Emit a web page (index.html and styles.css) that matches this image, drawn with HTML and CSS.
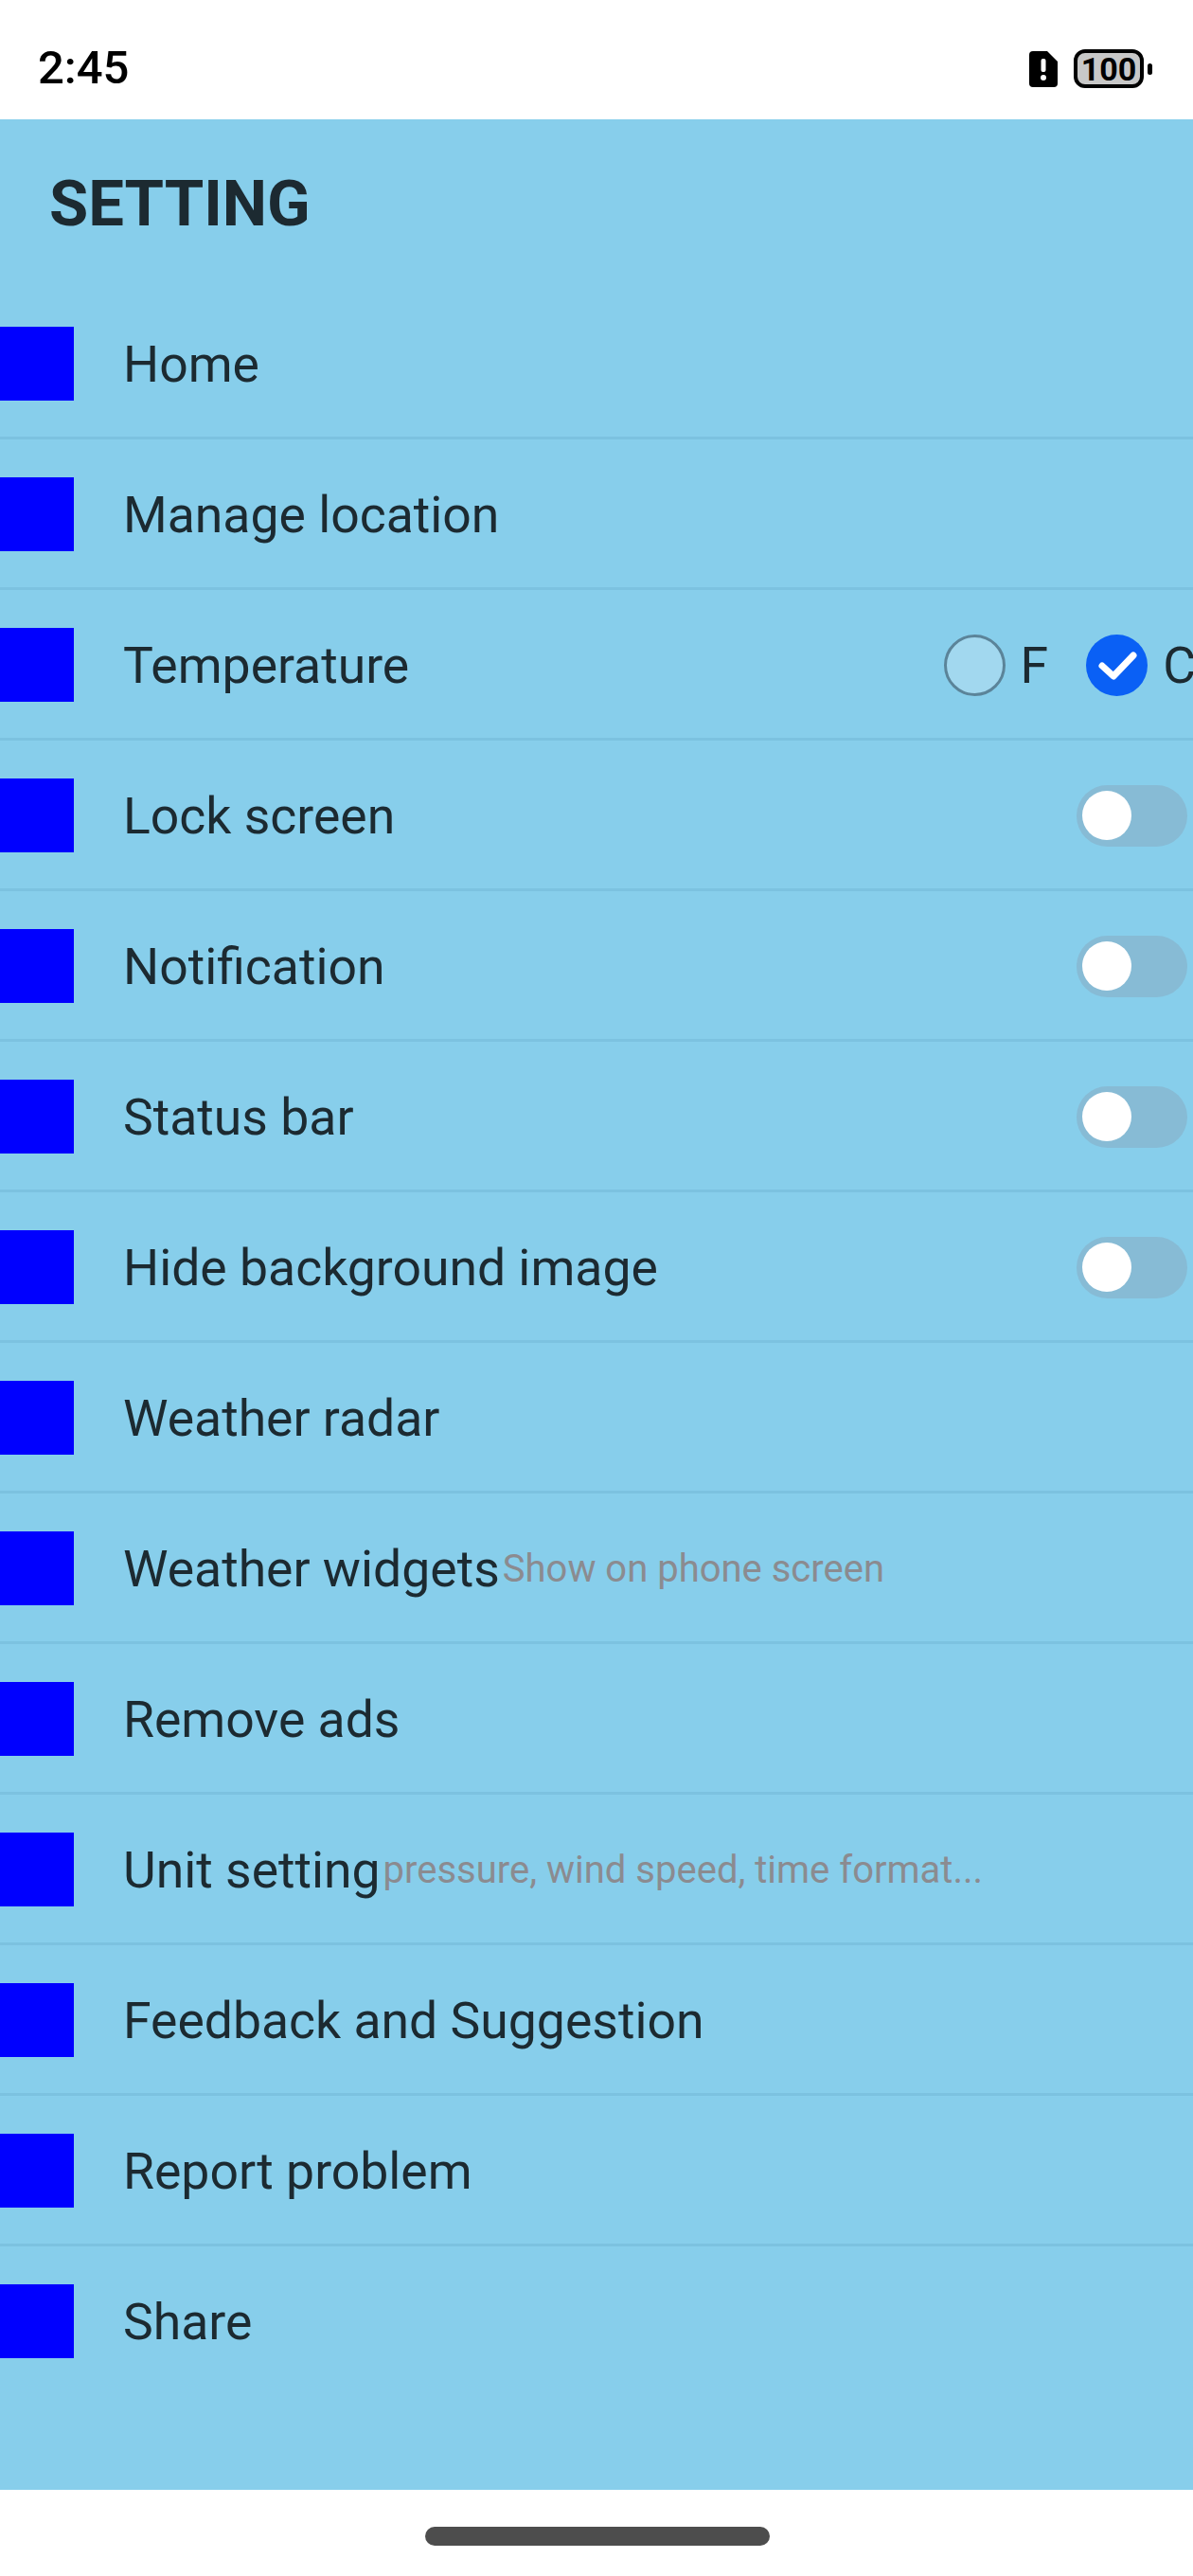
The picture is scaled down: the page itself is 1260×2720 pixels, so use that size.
FILE: index.html
```html
<!DOCTYPE html>
<html>
<head>
    <meta charset="UTF-8">
    <meta name="viewport" content="width=device-width, initial-scale=1.0">
    <title>Setting</title>
    <link rel="stylesheet" href="styles.css">
</head>
<body>
    <div class="status-bar">
        <span class="time">2:45</span>
        <div class="status-icons">
            <svg class="sim-icon" viewBox="0 0 30 38" width="30" height="38">
                <path d="M4 0H19L30 11V34a4 4 0 0 1-4 4H4a4 4 0 0 1-4-4V4a4 4 0 0 1 4-4Z" fill="#000"/>
                <rect x="12.5" y="8" width="5" height="14" rx="2" fill="#fff"/>
                <circle cx="15" cy="28" r="3" fill="#fff"/>
            </svg>
            <div class="battery"><span>100</span></div>
            <div class="battery-nub"></div>
        </div>
    </div>

    <main class="settings">
        <h1>SETTING</h1>

        <div class="row">
            <div class="icon"></div>
            <span class="label">Home</span>
        </div>
        <div class="row">
            <div class="icon"></div>
            <span class="label">Manage location</span>
        </div>
        <div class="row">
            <div class="icon"></div>
            <span class="label">Temperature</span>
            <div class="units">
                <div class="radio"></div>
                <span class="unit-name unit-f">F</span>
                <svg class="radio-checked" viewBox="0 0 65 65" width="65" height="65">
                    <circle cx="32.5" cy="32.5" r="32.5" fill="#0a60f5"/>
                    <path d="M17 33L29 44L50 22" fill="none" stroke="#fff" stroke-width="7" stroke-linecap="round" stroke-linejoin="round"/>
                </svg>
                <span class="unit-name">C</span>
            </div>
        </div>
        <div class="row">
            <div class="icon"></div>
            <span class="label">Lock screen</span>
            <div class="toggle"><div class="knob"></div></div>
        </div>
        <div class="row">
            <div class="icon"></div>
            <span class="label">Notification</span>
            <div class="toggle"><div class="knob"></div></div>
        </div>
        <div class="row">
            <div class="icon"></div>
            <span class="label">Status bar</span>
            <div class="toggle"><div class="knob"></div></div>
        </div>
        <div class="row">
            <div class="icon"></div>
            <span class="label">Hide background image</span>
            <div class="toggle"><div class="knob"></div></div>
        </div>
        <div class="row">
            <div class="icon"></div>
            <span class="label">Weather radar</span>
        </div>
        <div class="row">
            <div class="icon"></div>
            <span class="label">Weather widgets</span>
            <span class="hint">Show on phone screen</span>
        </div>
        <div class="row">
            <div class="icon"></div>
            <span class="label">Remove ads</span>
        </div>
        <div class="row">
            <div class="icon"></div>
            <span class="label">Unit setting</span>
            <span class="hint">pressure, wind speed, time format...</span>
        </div>
        <div class="row">
            <div class="icon"></div>
            <span class="label">Feedback and Suggestion</span>
        </div>
        <div class="row">
            <div class="icon"></div>
            <span class="label">Report problem</span>
        </div>
        <div class="row">
            <div class="icon"></div>
            <span class="label">Share</span>
        </div>
    </main>

    <div class="nav-bar">
        <div class="nav-handle"></div>
    </div>
</body>
</html>
```

FILE: styles.css
```css
html, body {
    margin: 0;
    padding: 0;
}

body {
    width: 1260px;
    height: 2720px;
    overflow: hidden;
    display: flex;
    flex-direction: column;
    background-color: #fff;
    font-family: Roboto, "Liberation Sans", sans-serif;
}

.status-bar {
    height: 126px;
    flex-shrink: 0;
    display: flex;
    align-items: center;
    justify-content: space-between;
    padding: 0 43px 0 40px;
    box-sizing: border-box;
}

.time {
    font-size: 49px;
    font-weight: 500;
    color: #000;
    margin-top: 17px;
}

.status-icons {
    display: flex;
    align-items: center;
    margin-top: 19px;
}

.sim-icon {
    margin-right: 17px;
}

.battery {
    width: 74px;
    height: 41px;
    box-sizing: border-box;
    border: 4px solid #000;
    border-radius: 12px;
    background-color: #c8c8c8;
    display: flex;
    align-items: center;
    justify-content: center;
    font-size: 34px;
    font-weight: 700;
    color: #000;
}

.battery-nub {
    width: 5px;
    height: 12px;
    margin-left: 4px;
    border-radius: 3px;
    background-color: #000;
}

.settings {
    height: 2503px;
    flex-shrink: 0;
    background-color: #87ceeb;
    overflow: hidden;
}

h1 {
    margin: 0;
    height: 179px;
    padding: 54px 0 0 52px;
    box-sizing: border-box;
    font-size: 67px;
    line-height: 70px;
    font-weight: 700;
    color: #1c2a31;
}

.row {
    height: 159px;
    box-sizing: border-box;
    display: flex;
    align-items: center;
    padding: 2px 6px 0 0;
    border-bottom: 3px solid #7cc2e0;
}

.row:last-child {
    border-bottom-color: transparent;
}

.icon {
    width: 78px;
    height: 78px;
    flex-shrink: 0;
    background-color: #0000ff;
}

.label {
    margin-left: 52px;
    font-size: 53.5px;
    color: #1c2a31;
    white-space: nowrap;
}

.hint {
    margin-left: 3px;
    font-size: 40px;
    color: #8b8b90;
    white-space: nowrap;
}

.units {
    margin-left: auto;
    margin-right: -9px;
    display: flex;
    align-items: center;
}

.radio {
    width: 65px;
    height: 65px;
    box-sizing: border-box;
    border: 3px solid #5b8499;
    border-radius: 50%;
    background-color: #a2d8ef;
}

.radio-checked {
    display: block;
}

.unit-name {
    font-size: 53.5px;
    color: #1c2a31;
    margin-left: 16px;
}

.unit-f {
    margin-right: 40px;
}

.toggle {
    margin-left: auto;
    width: 117px;
    height: 65px;
    border-radius: 33px;
    background-color: #87bbd5;
    display: flex;
    align-items: center;
    padding-left: 6px;
    box-sizing: border-box;
}

.knob {
    width: 52px;
    height: 52px;
    border-radius: 50%;
    background-color: #fff;
}

.nav-bar {
    flex: 1;
    display: flex;
    justify-content: center;
    padding: 39px 0 0 2px;
    box-sizing: border-box;
}

.nav-handle {
    width: 364px;
    height: 20px;
    border-radius: 10px;
    background-color: #4d4d4d;
}
```
